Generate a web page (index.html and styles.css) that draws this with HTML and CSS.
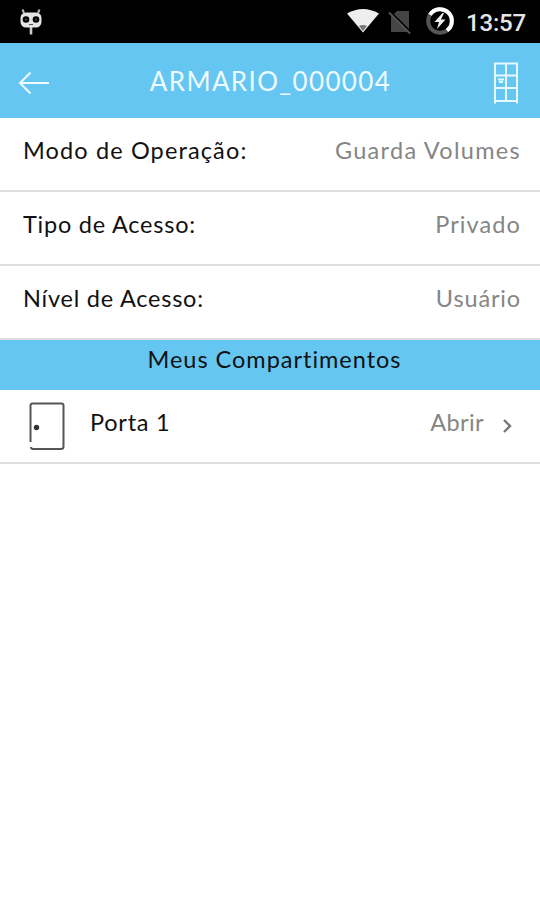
FILE: index.html
```
<!DOCTYPE html>
<html lang="pt-BR">
<head>
<meta charset="utf-8">
<title>Armário</title>
<link rel="stylesheet" href="styles.css">
</head>
<body>
<div class="status">
  <svg class="cid" width="24" height="28" viewBox="0 0 24 28"><path d="M3.500 1.500 5 5M20.500 1.500 19 5" stroke="#bbb" stroke-width="2" fill="none"/><path d="M12 19v7.500" stroke="#ccc" stroke-width="2.600"/><rect x="1.500" y="4.500" width="21" height="15" rx="5.500" fill="#e4e4e4"/><circle cx="7" cy="11.500" r="3.300"/><circle cx="17" cy="11.500" r="3.300"/><circle cx="7" cy="11.500" r="1" fill="#555"/><circle cx="17" cy="11.500" r="1" fill="#555"/><path d="M10 16.500h4" stroke="#555"/></svg>
  <svg class="wifi" width="34" height="26" viewBox="0 0 34 26"><path d="M1 5.500Q17-3.500 33 5.500L17 24.500Z" fill="#eee"/><path d="M13 18Q17 16 21 18L17 23Z" fill="#777"/></svg>
  <svg class="sim" width="24" height="26" viewBox="0 0 24 26"><path d="M9 2H21V23H3V8Z" fill="#454545"/><path d="M2 2.500 24 24.500" stroke="#000" stroke-width="2"/><path d="M1 3.500 22 24.500" stroke="#555" stroke-width="1.800"/></svg>
  <svg class="batt" width="30" height="30" viewBox="0 0 30 30"><circle cx="15" cy="15" r="11.800" fill="none" stroke="#555" stroke-width="4"/><path d="M5 8.800A11.800 11.800 0 1 1 22 24.500" fill="none" stroke="#fff" stroke-width="4"/><path d="M17.500 7 9.500 16H14L12 23 20.500 13.500H16L19 7Z" fill="#eee"/></svg>
  <span class="clock">13:57</span>
</div>
<header class="bar">
  <svg class="back" width="34" height="26" viewBox="0 0 34 26"><path d="M31 13H2M12.500 2.500 2 13 12.500 23.500" fill="none" stroke="#edfaff" stroke-width="2"/></svg>
  <h1>ARMARIO_000004</h1>
  <svg class="locker" width="28" height="44" viewBox="0 0 28 44"><path d="M3 42.500V2.500H25V42.500M3 14.500H25M3 27H25M3 40H25M14 2.500V40" fill="none" stroke="#e8f8ff" stroke-width="2"/><path d="M6 18.500H12M7 21H11" stroke="#e8f8ff" stroke-width="1.800"/></svg>
</header>
<main>
  <div class="row"><span class="label mode">Modo de Operação:</span><span class="value storage">Guarda Volumes</span></div>
  <div class="row"><span class="label">Tipo de Acesso:</span><span class="value">Privado</span></div>
  <div class="row"><span class="label">Nível de Acesso:</span><span class="value user">Usuário</span></div>
  <h2>Meus Compartimentos</h2>
  <div class="row">
    <svg class="door-icon" width="38" height="50" viewBox="0 0 38 50"><path d="M2.500 41V4.500Q2.500 2.500 4.500 2.500H33.500Q35.500 2.500 35.500 4.500V45.500Q35.500 48 33 48H5Q3 48 3 46" fill="none" stroke="#555" stroke-width="2"/><circle cx="8.500" cy="26.500" r="2.700" fill="#333"/></svg>
    <span class="label">Porta 1</span><span class="value open">Abrir</span>
    <svg class="chev" width="10" height="16" viewBox="0 0 10 16"><path d="M2 2 8 8 2 14" fill="none" stroke="#777" stroke-width="2.400"/></svg>
  </div>
</main>
</body>
</html>
```
FILE: styles.css
```
* { box-sizing: border-box; }
body { margin: 0; background: #fff; color: #111; font: 23.5px/30px Lato, sans-serif; font-variant-ligatures: none; }
.status { height: 43px; background: #000; display: flex; align-items: flex-start; padding: 0 14px 0 19px; }
.cid { margin-top: 8px; }
.wifi { margin: 8px 0 0 auto; }
.sim { margin: 9px 0 0 8px; }
.batt { margin: 6px 0 0 13px; }
.clock { margin: 8px 0 0 11px; color: #e6e6e6; font: 500 24px/30px Roboto, sans-serif; letter-spacing: -0.2px; }
.bar { height: 75px; background: #65c6f1; display: flex; align-items: center; padding: 0 20px 0 18px; }
.back { margin-top: 4px; }
.locker { margin-top: 5px; }
.bar h1 { flex: 1; margin: 0 3px 0 0; text-align: center; color: #edfaff; font-size: 26px; font-weight: 400; letter-spacing: 1.35px; }
.row { height: 74px; padding: 17px 20px 0 23px; border-bottom: 2px solid #dedede; display: flex; align-items: flex-start; }
.label { letter-spacing: 0.77px; }
.mode { letter-spacing: 1.13px; }
.value { margin-left: auto; margin-right: -1px; color: #858585; letter-spacing: 1.1px; }
.storage { letter-spacing: 1.3px; }
.user { letter-spacing: 0.85px; }
.open { margin-right: 0; letter-spacing: 0.4px; }
h2 { margin: 0; height: 50px; padding: 4px 0 0 9px; background: #65c6f1; text-align: center; font-size: 23.5px; font-weight: 400; letter-spacing: 0.98px; }
.door-icon { margin: -6px 24px 0 5px; }
.chev { margin: 11px 8px 0 18px; }
```
